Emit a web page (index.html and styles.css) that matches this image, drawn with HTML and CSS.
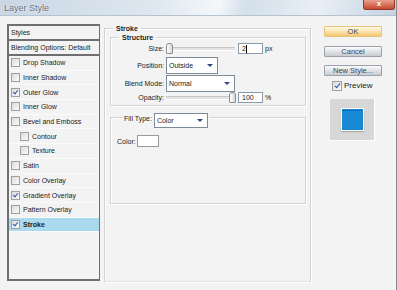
FILE: index.html
```html
<!DOCTYPE html>
<html lang="en">
<head>
    <meta charset="UTF-8">
    <title>Layer Style</title>
    <link rel="stylesheet" href="styles.css">
</head>
<body>
    <div class="window">
        <div class="title-bar">
            <span class="title-text">Layer Style</span>
            <span class="close-button">x</span>
        </div>
        <div class="dialog-body">
            <div class="style-list">
                <div class="list-head">Styles</div>
                <div class="list-head">Blending Options: Default</div>
                <ul class="effects">
                    <li><span class="check"></span>Drop Shadow</li>
                    <li><span class="check"></span>Inner Shadow</li>
                    <li><span class="check checked"></span>Outer Glow</li>
                    <li><span class="check"></span>Inner Glow</li>
                    <li><span class="check"></span>Bevel and Emboss</li>
                    <li class="sub"><span class="check"></span>Contour</li>
                    <li class="sub"><span class="check"></span>Texture</li>
                    <li><span class="check"></span>Satin</li>
                    <li><span class="check"></span>Color Overlay</li>
                    <li><span class="check checked"></span>Gradient Overlay</li>
                    <li><span class="check"></span>Pattern Overlay</li>
                    <li class="selected"><span class="check checked"></span>Stroke</li>
                </ul>
            </div>

            <fieldset class="group group-stroke">
                <legend>Stroke</legend>
                <fieldset class="group group-structure">
                    <legend>Structure</legend>
                    <div class="field-row row-size">
                        <span class="field-label">Size:</span>
                        <div class="slider"><span class="thumb thumb-left"></span></div>
                        <span class="num-box">2<span class="caret"></span></span>
                        <span class="unit">px</span>
                    </div>
                    <div class="field-row row-position">
                        <span class="field-label">Position:</span>
                        <span class="dropdown dd-position">Outside<span class="arrow"></span></span>
                    </div>
                    <div class="field-row row-blend">
                        <span class="field-label">Blend Mode:</span>
                        <span class="dropdown dd-blend">Normal<span class="arrow"></span></span>
                    </div>
                    <div class="field-row row-opacity">
                        <span class="field-label">Opacity:</span>
                        <div class="slider"><span class="thumb thumb-right"></span></div>
                        <span class="num-box">100</span>
                        <span class="unit">%</span>
                    </div>
                </fieldset>
                <fieldset class="group group-fill">
                    <legend>Fill Type: <span class="dropdown dd-fill">Color<span class="arrow"></span></span></legend>
                    <div class="color-row">
                        <span>Color:</span>
                        <span class="swatch"></span>
                    </div>
                </fieldset>
            </fieldset>

            <div class="actions">
                <button type="button" class="btn btn-ok">OK</button>
                <button type="button" class="btn">Cancel</button>
                <button type="button" class="btn">New Style...</button>
                <div class="preview-check"><span class="check big checked"></span>Preview</div>
                <div class="preview-box">
                    <div class="preview-square"></div>
                </div>
            </div>
        </div>
    </div>
</body>
</html>
```

FILE: styles.css
```css
body {
    margin: 0;
    font-family: "Liberation Sans", Arial, sans-serif;
    font-size: 7px;
    color: #222;
    background: #f3f3f3;
}
.window {
    width: 397px;
    height: 290px;
    background: #f3f3f3;
    border-right: 1px solid #8a8a8a;
    box-sizing: border-box;
    overflow: hidden;
}
.title-bar {
    height: 15px;
    display: flex;
    align-items: flex-start;
    justify-content: space-between;
    background: linear-gradient(100deg, #c9d6e3 0%, #dfe8f0 40%, #f4f7fa 55%, #d3dfea 62%, #e9eff5 80%, #c4d3e2 100%);
    border-bottom: 1px solid #b5c2cf;
}
.title-text {
    padding: 3px 0 0 4px;
    font-size: 9px;
    color: #66707a;
    text-shadow: 0 0 2px #fff;
}
.close-button {
    width: 30px;
    height: 9px;
    margin-right: 1px;
    background: linear-gradient(#e8a08e, #c9472e);
    border: 1px solid #8f3a2a;
    border-top: none;
    border-radius: 0 0 3px 3px;
    color: #fff;
    font-size: 8px;
    font-weight: bold;
    text-align: center;
    line-height: 8px;
}

.dialog-body {
    display: flex;
    align-items: flex-start;
    padding: 8px 0 0 7px;
}

/* left style list */
.style-list {
    width: 93px;
    height: 257px;
    box-sizing: border-box;
    border: 2px solid #6f6f6f;
    border-right-width: 1px;
    background: #f3f3f3;
}
.list-head {
    height: 13px;
    line-height: 13px;
    padding-left: 2px;
    border-bottom: 2px solid #6f6f6f;
}
.effects {
    list-style: none;
    margin: 0;
    padding: 0;
}
.effects li {
    height: 14.7px;
    display: flex;
    align-items: center;
    padding-left: 2px;
    border-bottom: 1px solid #fbfbfb;
    box-sizing: border-box;
}
.effects li.sub {
    padding-left: 11px;
}
.effects li.selected {
    background: #abdaee;
    font-weight: bold;
}
.check {
    width: 7px;
    height: 7px;
    margin-right: 3px;
    border: 1px solid #a0a0a0;
    background: linear-gradient(135deg, #dcdcdc, #fafafa);
    position: relative;
    flex: none;
}
.check.checked::after {
    content: "";
    position: absolute;
    left: 2px;
    top: 0px;
    width: 2px;
    height: 4px;
    border: solid #2a55b5;
    border-width: 0 1.5px 1.5px 0;
    transform: rotate(40deg);
}
.check.big {
    width: 8px;
    height: 8px;
    margin-right: 2px;
}
.check.big::after {
    left: 3px;
    width: 2px;
    height: 5px;
}

/* middle groups */
.group {
    margin: 0;
    border: 1px solid #d2d2d2;
    box-shadow: inset 1px 1px 0 #fff, 1px 1px 0 #fff;
}
.group legend {
    font-weight: bold;
    padding: 0 3px;
}
.group-stroke {
    width: 207px;
    height: 257px;
    box-sizing: border-box;
    margin: 1px 0 0 4px;
    padding: 2px 4px 0 5px;
    border-bottom-color: #e0e0e0;
}
.group-stroke > legend {
    margin-left: 3px;
}
.group-structure {
    padding: 0 0 2px 0;
}
.group-structure > legend {
    margin-left: 8px;
}
.field-row {
    display: flex;
    align-items: center;
}
.field-label {
    width: 53px;
    text-align: right;
    margin-right: 2px;
}
.row-size { height: 15px; }
.row-position { height: 18px; }
.row-blend { height: 18px; }
.row-opacity { height: 11px; }

.slider {
    width: 69px;
    height: 2px;
    border-top: 1px solid #c8c8c8;
    border-bottom: 1px solid #fff;
    background: #e4e4e4;
    position: relative;
    margin-right: 3px;
}
.thumb {
    position: absolute;
    top: -5px;
    width: 5px;
    height: 9px;
    border: 1px solid #8c8c8c;
    border-radius: 3px 3px 1px 1px;
    background: linear-gradient(90deg, #fff, #d8d8d8);
}
.thumb-left { left: 0; }
.thumb-right { right: -1px; }
.num-box {
    width: 25px;
    height: 11px;
    padding-left: 3px;
    box-sizing: border-box;
    background: #fff;
    border: 1px solid #8a9aa8;
    margin-right: 2px;
    display: flex;
    align-items: center;
}
.caret {
    width: 1px;
    height: 8px;
    background: #000;
}
.dropdown {
    height: 17px;
    box-sizing: border-box;
    border: 1px solid #7c8a99;
    background: #fff;
    display: inline-flex;
    align-items: center;
    justify-content: space-between;
    padding: 0 4px 0 2px;
    font-weight: normal;
}
.arrow {
    width: 0;
    height: 0;
    border-left: 3px solid transparent;
    border-right: 3px solid transparent;
    border-top: 3px solid #31477a;
}
.dd-position { width: 52px; }
.dd-blend { width: 69px; }
.dd-fill {
    width: 54px;
    height: 15px;
    margin-left: 2px;
}
.group-fill {
    height: 89px;
    box-sizing: border-box;
    margin-top: 9px;
    padding: 16px 0 0 6px;
}
.group-fill > legend {
    font-weight: normal;
    margin-left: 6px;
    padding: 0 1px;
    height: 4px;
    display: flex;
    align-items: flex-start;
}
.group-fill > legend .dropdown {
    margin-top: -2px;
}
.color-row {
    display: flex;
    align-items: center;
}
.swatch {
    width: 20px;
    height: 10px;
    margin-left: 1px;
    background: #fff;
    border: 1px solid #9a9a9a;
}

/* right column */
.actions {
    width: 58px;
    margin: 2px 0 0 13px;
    display: flex;
    flex-direction: column;
    align-items: stretch;
}
.btn {
    height: 11px;
    margin: 0 0 8.5px 0;
    padding: 0;
    font-family: "Liberation Sans", Arial, sans-serif;
    font-size: 7.5px;
    color: #394a5e;
    line-height: 9px;
    border: 1px solid #9aa2ad;
    border-radius: 1px;
    background: linear-gradient(#fbfbfb, #e2e3e6 50%, #c9cbd1);
}
.btn-ok {
    border-color: #e7c27b;
    background: linear-gradient(#fffbea, #fbe3ae 50%, #f3c56e);
}
.preview-check {
    display: flex;
    align-items: center;
    margin: -4px 0 0 8px;
    font-size: 8px;
}
.preview-box {
    width: 44px;
    height: 41px;
    margin: 8px 0 0 6px;
    background: #d7d7d7;
    border-bottom: 1px solid #fff;
    border-right: 1px solid #fff;
    display: flex;
    align-items: center;
    justify-content: center;
}
.preview-square {
    width: 21px;
    height: 21px;
    background: #1888d4;
    border: 1px solid #fff;
    box-shadow: 0 1px 1px #aaa;
    position: relative;
}
.preview-square::before {
    content: "";
    position: absolute;
    left: 1px;
    right: 1px;
    top: 1px;
    border-top: 1px dotted #0b4f8a;
}
```
